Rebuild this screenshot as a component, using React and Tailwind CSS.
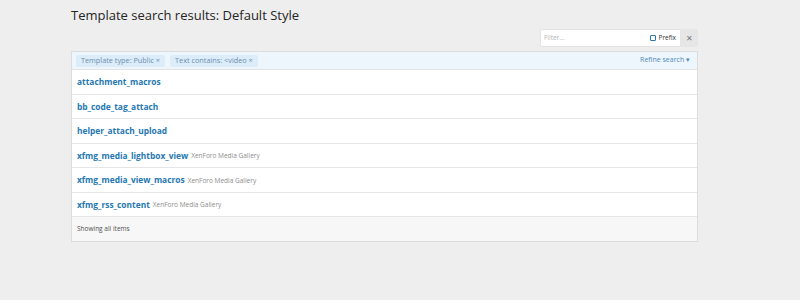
import React from "react";

const rows = [
  { name: "attachment_macros" },
  { name: "bb_code_tag_attach" },
  { name: "helper_attach_upload" },
  { name: "xfmg_media_lightbox_view", addon: "XenForo Media Gallery" },
  { name: "xfmg_media_view_macros", addon: "XenForo Media Gallery" },
  { name: "xfmg_rss_content", addon: "XenForo Media Gallery" },
];

export default function App() {
  return (
    <div
      className="w-[800px] h-[300px] bg-[#eeeeee] overflow-hidden"
      style={{ fontFamily: '"Open Sans", "Noto Sans", sans-serif' }}
    >
      <div className="ml-[71px] w-[627px]">
        {/* Title */}
        <h1 className="pt-[6px] h-[29px] text-[13px] leading-[18px] text-[#242424]">
          Template search results: Default Style
        </h1>

        {/* Filter bar */}
        <div className="flex justify-end h-[22px]">
          <div className="flex h-[18px] w-[141px] items-center bg-white border border-[#e4e4e4] rounded-l-[2px]">
            <span className="flex-1 pl-[3px] text-[6.5px] text-[#b5b5b5]">Filter...</span>
            <span className="flex items-center gap-[3px] pr-[4px] text-[6.5px] text-[#333]">
              <span className="w-[6px] h-[6px] border border-[#2577b1] rounded-[1px] bg-white" />
              Prefix
            </span>
          </div>
          <div className="flex h-[18px] w-[17px] items-center justify-center bg-[#e6e6e6] text-[8px] text-[#777] rounded-r-[2px]">
            ✕
          </div>
        </div>

        {/* Block */}
        <div className="border border-[#dcdcdc] bg-white">
          <div className="flex items-center justify-between h-[18px] bg-[#edf6fd] border-b border-[#e3e3e3] px-[4px]">
            <div className="flex gap-[5px]">
              <span className="h-[12px] flex items-center px-[5px] rounded-[2px] bg-[#dcecf8] text-[7.3px] text-[#6a8fb0]">
                Template type: Public ×
              </span>
              <span className="h-[12px] flex items-center px-[5px] rounded-[2px] bg-[#dcecf8] text-[7.3px] text-[#6a8fb0]">
                Text contains: &lt;video ×
              </span>
            </div>
            <span className="pr-[3px] text-[7px] text-[#4d89b8]">Refine search ▾</span>
          </div>

          {rows.map((row) => (
            <div
              key={row.name}
              className="flex items-center h-[24.5px] pt-[2px] px-[5px] border-b border-[#e6e6e6]"
            >
              <span className="text-[8.4px] font-bold text-[#2577b1]">{row.name}</span>
              {row.addon && (
                <span className="ml-[3px] text-[6.5px] text-[#8c8c8c]">{row.addon}</span>
              )}
            </div>
          ))}

          <div className="flex items-center h-[24px] px-[5px] bg-[#f7f7f7] text-[6.5px] text-[#505050]">
            Showing all items
          </div>
        </div>
      </div>
    </div>
  );
}
